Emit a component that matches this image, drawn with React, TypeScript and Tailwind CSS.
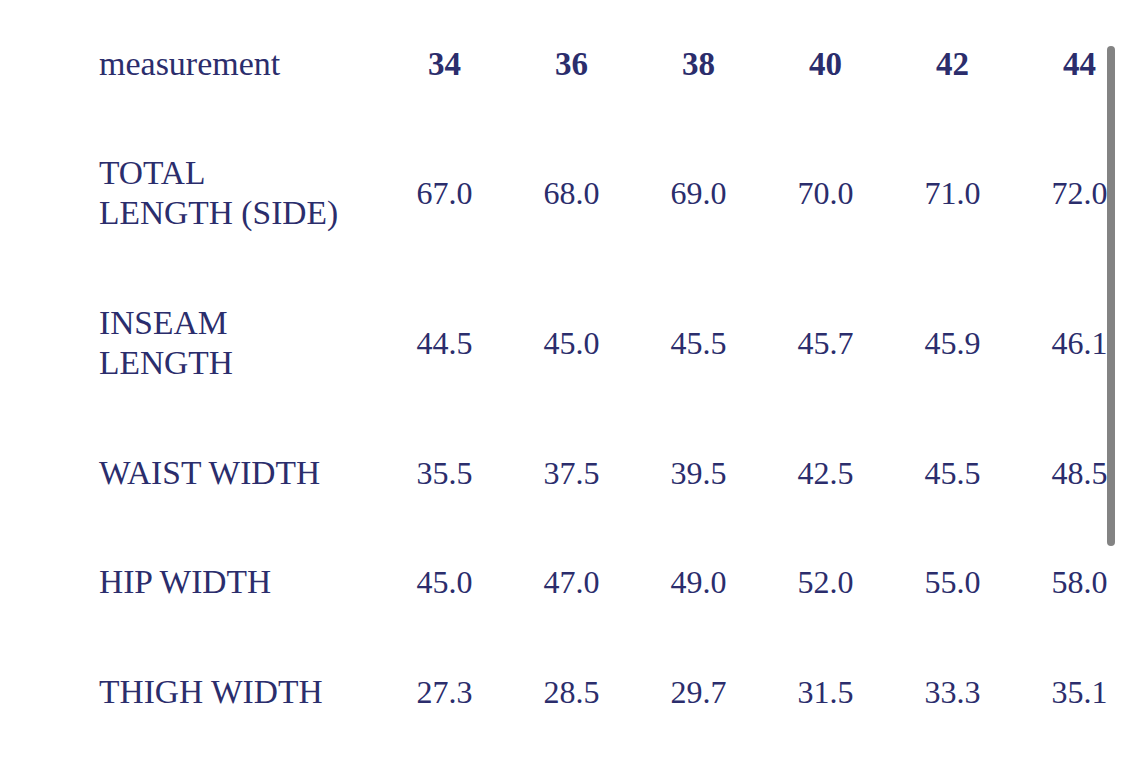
const sizes = ["34", "36", "38", "40", "42", "44"]

const rows = [
  { label: ["TOTAL", "LENGTH (SIDE)"], values: ["67.0", "68.0", "69.0", "70.0", "71.0", "72.0"], h: "h-[149px]" },
  { label: ["INSEAM", "LENGTH"], values: ["44.5", "45.0", "45.5", "45.7", "45.9", "46.1"], h: "h-[151px]" },
  { label: ["WAIST WIDTH"], values: ["35.5", "37.5", "39.5", "42.5", "45.5", "48.5"], h: "h-[109px]" },
  { label: ["HIP WIDTH"], values: ["45.0", "47.0", "49.0", "52.0", "55.0", "58.0"], h: "h-[110px]" },
  { label: ["THIGH WIDTH"], values: ["27.3", "28.5", "29.7", "31.5", "33.3", "35.1"], h: "h-[110px]" },
]

export default function App() {
  return (
    <div className="relative w-[1125px] h-[775px] overflow-hidden bg-white text-[#2b2d6c] font-['Liberation_Serif',serif] text-[34px] leading-[40px]">
      <div className="pt-[10px] pl-[99px]">
        <div className="grid grid-cols-[282px_repeat(6,127px)] h-[108px] items-center">
          <div>measurement</div>
          {sizes.map((s) => (
            <div key={s} className="text-center font-bold text-[33px]">{s}</div>
          ))}
        </div>
        {rows.map((r) => (
          <div key={r.label.join(" ")} className={`grid grid-cols-[282px_repeat(6,127px)] items-center ${r.h}`}>
            <div className="text-[33.5px]">
              {r.label.map((l) => (
                <div key={l}>{l}</div>
              ))}
            </div>
            {r.values.map((v, i) => (
              <div key={i} className="text-center text-[32px]">{v}</div>
            ))}
          </div>
        ))}
      </div>

      {/* scroll indicator */}
      <div className="absolute left-[1107px] top-[46px] w-[8px] h-[500px] rounded-full bg-[#838383]" />
    </div>
  )
}
